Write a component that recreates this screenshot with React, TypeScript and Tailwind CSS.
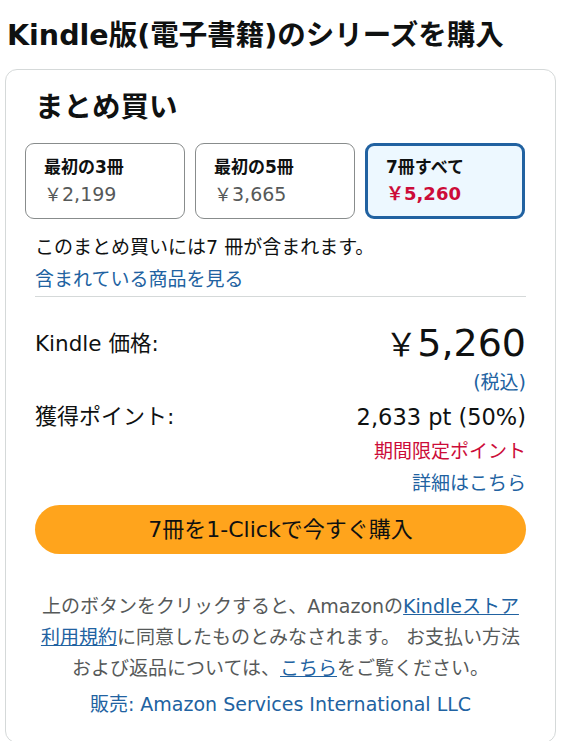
import React from "react";

const font = { fontFamily: '"DejaVu Sans", "Noto Sans CJK JP", sans-serif' };

function Option({ title, price, selected }: { title: string; price: string; selected?: boolean }) {
  return (
    <div
      className={
        selected
          ? "w-[160px] h-[76px] rounded-[9px] border-[3px] border-[#2162a1] bg-[#edf8ff] pl-[18px] pt-[8px]"
          : "w-[160px] h-[76px] rounded-[9px] border border-[#888c8c] bg-white pl-[18px] pt-[10px]"
      }
    >
      <div className="text-[17px] font-bold leading-[26px] text-[#0f1111]">{title}</div>
      {selected ? (
        <div className="text-[18px] font-bold leading-[28px] text-[#cc0c39]">
          <span className="text-[18px]">￥</span>
          {price}
        </div>
      ) : (
        <div className="text-[19px] leading-[28px] text-[#565959]">
          <span className="text-[18px]">￥</span>
          {price}
        </div>
      )}
    </div>
  );
}

export default function App() {
  return (
    <div className="w-[562px] h-[741px] overflow-hidden bg-white text-[#0f1111]" style={font}>
      <h1 className="pl-[7px] pt-[16px] text-[28.5px] font-bold leading-[40px] whitespace-nowrap">
        Kindle版(電子書籍)のシリーズを購入
      </h1>
      <div className="ml-[5px] mt-[13px] w-[551px] h-[674px] rounded-[12px] border border-[#d5d9d9] px-[29px] pt-[18px]">
        <div className="text-[28.5px] font-bold leading-[40px]">まとめ買い</div>
        <div className="-ml-[10px] mt-[15px] flex gap-[10px]">
          <Option title="最初の3冊" price="2,199" />
          <Option title="最初の5冊" price="3,665" />
          <Option title="7冊すべて" price="5,260" selected />
        </div>
        <div className="mt-[13px] text-[19px] leading-[30px]">このまとめ買いには7 冊が含まれます。</div>
        <div className="text-[19px] leading-[34px] text-[#2162a1]">含まれている商品を見る</div>
        <div className="border-t border-[#d5d9d9]" />
        <div className="mt-[24px] flex h-[46px] items-center justify-between">
          <div className="text-[21.5px] leading-[30px]">Kindle 価格:</div>
          <div className="flex items-baseline leading-[46px]">
            <span className="text-[32px]">￥</span>
            <span className="text-[38px]">5,260</span>
          </div>
        </div>
        <div className="text-right text-[19px] leading-[30px] text-[#2162a1]">(税込)</div>
        <div className="mt-[3px] flex h-[34px] items-center justify-between">
          <div className="text-[22px] leading-[34px]">獲得ポイント:</div>
          <div className="text-[22.5px] leading-[34px]">2,633 pt (50%)</div>
        </div>
        <div className="text-right text-[19px] leading-[34px] text-[#cc0c39]">期間限定ポイント</div>
        <div className="text-right text-[19px] leading-[30px] text-[#2162a1]">詳細はこちら</div>
        <div className="mt-[7px] flex h-[49px] items-center justify-center rounded-full bg-[#ffa41c] text-[22px]">
          7冊を1-Clickで今すぐ購入
        </div>
        <div className="mt-[37px] text-center text-[19px] leading-[31px] text-[#565959] whitespace-nowrap">
          上のボタンをクリックすると、Amazonの
          <span className="text-[#2162a1] underline">Kindleストア</span>
          <br />
          <span className="text-[#2162a1] underline">利用規約</span>
          に同意したものとみなされます。 お支払い方法
          <br />
          および返品については、
          <span className="text-[#2162a1] underline">こちら</span>
          をご覧ください。
        </div>
        <div className="mt-[5px] text-center text-[19px] leading-[30px] text-[#2162a1] whitespace-nowrap">
          販売: Amazon Services International LLC
        </div>
      </div>
    </div>
  );
}
